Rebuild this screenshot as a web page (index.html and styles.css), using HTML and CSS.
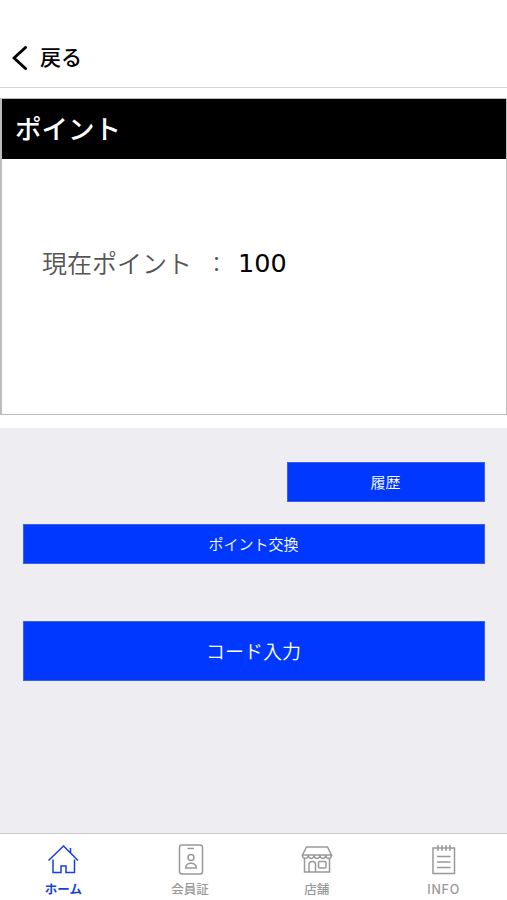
FILE: index.html
```
<!DOCTYPE html>
<html lang="ja">
<head>
<meta charset="utf-8">
<title>ポイント</title>
<link rel="stylesheet" href="styles.css">
</head>
<body>
<header class="header">
  <svg class="back-icon" width="17" height="28" viewBox="0 0 17 28"><path d="M15.500 3.500 4 14 15.500 24.500"/></svg>
  <span class="back-label">戻る</span>
</header>
<main class="main">
  <section class="card-wrap">
    <div class="card">
      <h1 class="card-title">ポイント</h1>
      <div class="balance"><span>現在ポイント</span><span class="colon">：</span><span class="value">100</span></div>
    </div>
  </section>
  <section class="actions">
    <button class="btn history">履歴</button>
    <button class="btn exchange">ポイント交換</button>
    <button class="btn code">コード入力</button>
  </section>
</main>
<nav class="tabs">
  <a class="tab active">
    <svg width="32" height="32" viewBox="0 0 32 32"><path d="M1.500 17.500 16.500 3 31 17.500M23.500 10V5M6 16.500V29.500H14V23H19V29.500H27.500V16.500"/></svg>
    <span>ホーム</span>
  </a>
  <a class="tab">
    <svg width="32" height="32" viewBox="0 0 32 32"><rect x="5.500" y="2" width="23" height="29" rx="2.500"/><path d="M13.500 5.500H20M11.700 25C11.700 18.500 22.300 18.500 22.300 25Z"/><circle cx="17" cy="14.500" r="3"/></svg>
    <span>会員証</span>
  </a>
  <a class="tab">
    <svg width="32" height="32" viewBox="0 0 32 32"><path d="M5.500 4H26.500L30.500 12H1.500ZM1.500 12C1.500 16.500 7.300 16.500 7.300 12C7.300 16.500 13.100 16.500 13.100 12C13.100 16.500 18.900 16.500 18.900 12C18.900 16.500 24.700 16.500 24.700 12C24.700 16.500 30.500 16.500 30.500 12M3.500 15V29H28.500V15M8 29V21.500C8 17.500 14.500 17.500 14.500 21.500V29"/><rect x="17.500" y="18.500" width="7.500" height="6.500" rx="1"/></svg>
    <span>店舗</span>
  </a>
  <a class="tab info">
    <svg width="32" height="32" viewBox="0 0 32 32"><path d="M5 5H26.500V30.500H5ZM10 2V8M14 2V8M18 2V8M22 2V8M9 13.500H22.500M9 19H22.500M9 24.500H22.500"/></svg>
    <span>INFO</span>
  </a>
</nav>
</body>
</html>
```
FILE: styles.css
```
* { box-sizing: border-box; }
body {
  margin: 0;
  height: 900px;
  display: flex;
  flex-direction: column;
  overflow: hidden;
  background: #fff;
  color: #000;
  font-family: "Noto Sans CJK JP", sans-serif;
}
.header {
  height: 88px;
  padding: 28px 10px 0;
  display: flex;
  align-items: center;
  gap: 13px;
  border-bottom: 1px solid #d6d6d6;
}
.back-icon { fill: none; stroke: #000; stroke-width: 3; stroke-linecap: round; stroke-linejoin: round; }
.back-label { font-size: 21px; font-weight: 500; line-height: 28px; padding-bottom: 3px; }
.main { flex: 1; display: flex; flex-direction: column; background: #eeedf2; }
.card-wrap { height: 340px; padding: 10px 0 13px; background: #fff; }
.card {
  height: 317px;
  border: 1px solid #bcbcbc;
  border-left: 2px solid #bcbcbc;
}
.card-title {
  margin: 0;
  height: 60px;
  padding-left: 13px;
  background: #000;
  color: #fff;
  font-size: 26.5px;
  font-weight: 500;
  line-height: 57px;
}
.balance {
  display: flex;
  align-items: center;
  height: 40px;
  margin: 83px 0 0 40px;
  color: #555;
  font-size: 25px;
  font-weight: 350;
}
.colon { width: 25px; margin-left: 12px; font-size: 21px; text-align: center; }
.value { margin-left: 9px; padding-top: 1px; color: #000; font-family: "DejaVu Sans", sans-serif; font-size: 25.5px; font-weight: 400; }
.actions { display: flex; flex-direction: column; padding: 34px 22px 0 23px; }
.btn {
  height: 40px;
  padding: 0 1px 2px 0;
  border: 1px solid #3f60dc;
  background: #0038ff;
  color: #fff;
  font: 350 15px "Noto Sans CJK JP", sans-serif;
}
.history { width: 198px; align-self: flex-end; }
.exchange { margin-top: 22px; }
.code { height: 60px; margin-top: 57px; font-size: 19px; }
.tabs {
  height: 67px;
  display: flex;
  border-top: 1px solid #c9c9cb;
  background: #fff;
}
.tab {
  flex: 1;
  display: flex;
  flex-direction: column;
  align-items: center;
  padding-top: 9px;
  color: #999;
  font-size: 12.5px;
  font-weight: 500;
  line-height: 18px;
}
.tab svg { fill: none; stroke: currentColor; stroke-width: 1.5; margin-bottom: 5px; }
.tab.active { color: #1740d8; font-weight: 700; }
.tab.info span { padding-top: 1px; font-family: Inter, sans-serif; font-size: 12.5px; letter-spacing: .7px; }
```
